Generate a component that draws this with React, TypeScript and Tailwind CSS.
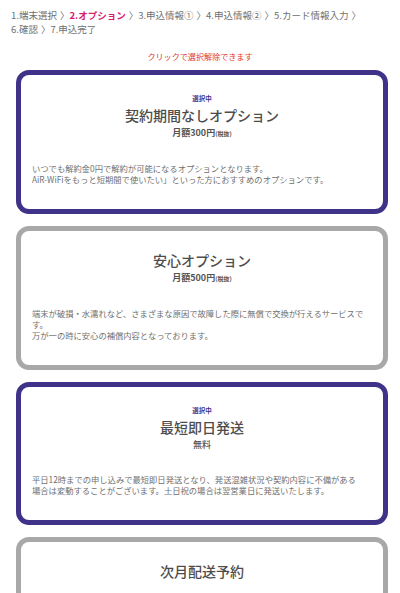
import React from "react";

type Option = {
  title: string;
  price?: React.ReactNode;
  lines: string[];
  selected: boolean;
};

const options: Option[] = [
  {
    title: "契約期間なしオプション",
    price: (
      <>
        月額300円<span className="text-[6px]">(税抜)</span>
      </>
    ),
    lines: [
      "いつでも解約金0円で解約が可能になるオプションとなります。",
      "AiR-WiFiをもっと短期間で使いたい」といった方におすすめのオプションです。",
    ],
    selected: true,
  },
  {
    title: "安心オプション",
    price: (
      <>
        月額500円<span className="text-[6px]">(税抜)</span>
      </>
    ),
    lines: [
      "端末が破損・水濡れなど、さまざまな原因で故障した際に無償で交換が行えるサービスで",
      "す。",
      "万が一の時に安心の補償内容となっております。",
    ],
    selected: false,
  },
  {
    title: "最短即日発送",
    price: <span className="font-medium">無料</span>,
    lines: [
      "平日12時までの申し込みで最短即日発送となり、発送混雑状況や契約内容に不備がある",
      "場合は変動することがございます。土日祝の場合は翌営業日に発送いたします。",
    ],
    selected: true,
  },
  {
    title: "次月配送予約",
    lines: [],
    selected: false,
  },
];

const stepsLine1 = [
  "1.端末選択",
  "2.オプション",
  "3.申込情報①",
  "4.申込情報②",
  "5.カード情報入力",
];

const Sep = () => <span className="ml-[3px]">〉</span>;

const OptionCard = ({ option }: { option: Option }) => (
  <div
    className={`rounded-[13px] border-[5px] bg-white px-[11px] pt-[19px] pb-[24px] ${
      option.selected ? "border-[#3f3289]" : "border-[#a8a8a8]"
    }`}
  >
    {option.selected && (
      <p className="text-center text-[6.5px] leading-[8px] font-bold text-[#3f3289]">
        選択中
      </p>
    )}
    <h2
      className={`text-center text-[14px] leading-[20px] font-medium text-[#4d4d4d] ${
        option.selected ? "mt-[3px]" : ""
      }`}
    >
      {option.title}
    </h2>
    {option.price && (
      <p className="mt-[1px] text-center text-[9px] leading-[14px] font-bold text-[#555]">
        {option.price}
      </p>
    )}
    {option.lines.length > 0 && (
      <div className="mt-[22px] text-[8.3px] leading-[11px] text-[#707070]">
        {option.lines.map((line, i) => (
          <p key={i} className="whitespace-nowrap">
            {line}
          </p>
        ))}
      </div>
    )}
    {option.lines.length === 0 && <div className="h-[60px]" />}
  </div>
);

export default function App() {
  return (
    <div
      className="min-h-[593px] bg-white"
      style={{ fontFamily: '"Noto Sans CJK JP", "Noto Sans", sans-serif' }}
    >
      {/* Steps */}
      <div className="px-[11px] pt-[8px] text-[9.5px] leading-[14px] text-[#707070]">
        <p className="whitespace-nowrap">
          {stepsLine1.map((s, i) => (
            <React.Fragment key={s}>
              <span className={i === 1 ? "font-bold text-[#d6206b]" : ""}>{s}</span>
              <Sep />
            </React.Fragment>
          ))}
        </p>
        <p className="whitespace-nowrap">
          6.確認
          <Sep />
          7.申込完了
        </p>
      </div>

      <p className="mt-[16px] text-center text-[8.1px] leading-[10px] text-[#e0382f]">
        クリックで選択解除できます
      </p>

      {/* Options */}
      <div className="mt-[8px] flex flex-col gap-[12px] pl-[16px] pr-[12px] pb-[20px]">
        {options.map((o) => (
          <OptionCard key={o.title} option={o} />
        ))}
      </div>
    </div>
  );
}
